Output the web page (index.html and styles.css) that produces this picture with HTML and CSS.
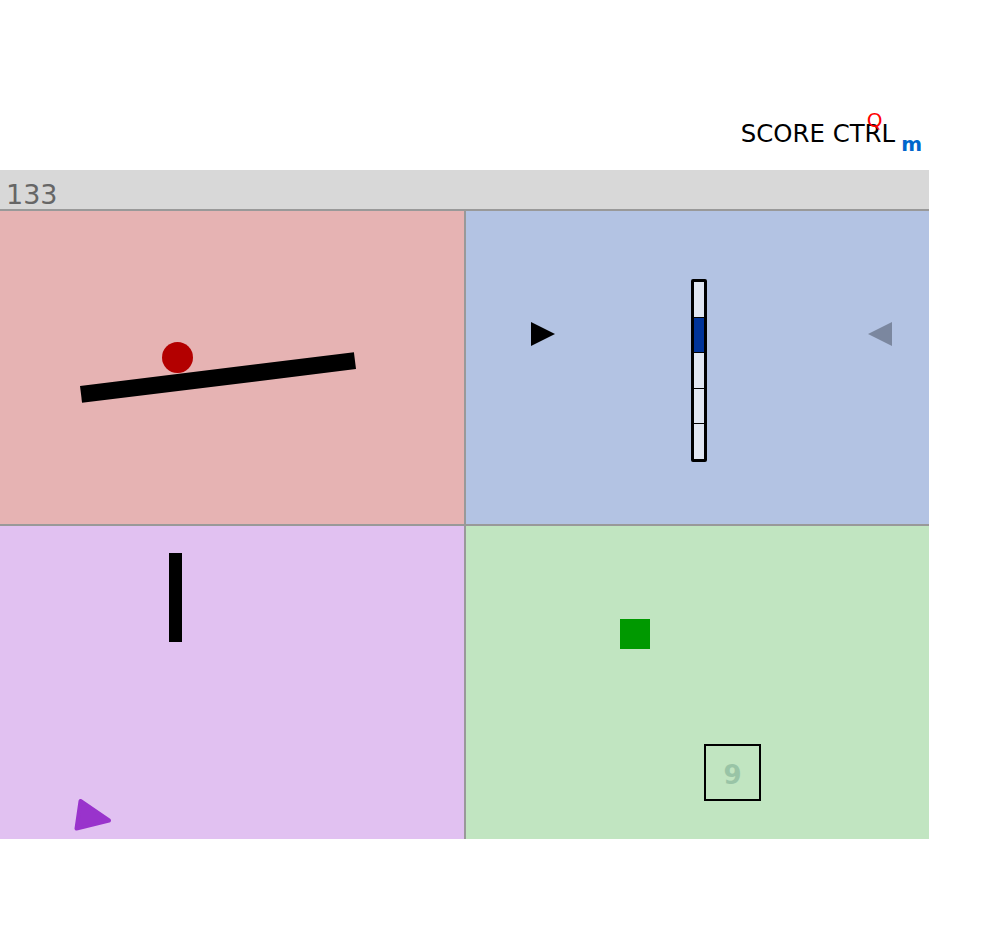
FILE: index.html
```html
<!DOCTYPE html>
<html>
<head>
<meta charset="utf-8">
<link rel="stylesheet" href="styles.css">
</head>
<body>
<div class="page">
  <header class="header">
    <span class="title">SCORE CTRL<span class="q">Q</span></span>
    <span class="mark">m</span>
  </header>
  <div class="scorebar">133</div>
  <div class="board">
    <section class="panel pink">
      <div class="beam"></div>
      <div class="ball"></div>
    </section>
    <section class="panel blue">
      <svg class="arrow arrow-right" width="24" height="24" viewBox="0 0 24 24"><polygon points="0,0 24,12 0,24" fill="#000"/></svg>
      <div class="meter">
        <div class="seg"></div>
        <div class="seg on"></div>
        <div class="seg"></div>
        <div class="seg"></div>
        <div class="seg"></div>
      </div>
      <svg class="arrow arrow-left" width="24" height="24" viewBox="0 0 24 24"><polygon points="24,0 0,12 24,24" fill="#7b879f"/></svg>
    </section>
    <section class="panel purple">
      <div class="post"></div>
      <svg class="tri" width="45" height="42" viewBox="0 0 45 42"><polygon points="10.5,7 39,26.5 6.5,34.5" fill="#9933cc" stroke="#9933cc" stroke-width="4" stroke-linejoin="round"/></svg>
    </section>
    <section class="panel green">
      <div class="block"></div>
      <div class="counter">9</div>
    </section>
  </div>
</div>
</body>
</html>
```

FILE: styles.css
```css
html, body {
  margin: 0;
  padding: 0;
  background: #fff;
}

body {
  font-family: "DejaVu Sans", "Noto Sans", sans-serif;
}

.page {
  width: 929px;
}

.header {
  height: 170px;
  display: flex;
  justify-content: flex-end;
  align-items: flex-start;
  padding-right: 7px;
  box-sizing: border-box;
}

.title {
  position: relative;
  margin-top: 120px;
  font-size: 24.4px;
  line-height: 28px;
  color: #000;
}

.q {
  position: absolute;
  left: 126px;
  top: -10px;
  font-size: 20px;
  line-height: 20px;
  color: #ff0000;
}

.mark {
  margin-top: 134px;
  margin-left: 6px;
  font-size: 20px;
  line-height: 20px;
  font-weight: bold;
  color: #0066cc;
}

.scorebar {
  background: #d8d8d8;
  color: #666;
  font-size: 27px;
  line-height: 26px;
  padding: 12px 0 1px 6px;
  border-bottom: 2px solid #999;
}

.board {
  display: grid;
  grid-template-columns: 464px 463px;
  grid-template-rows: 313px 313px;
  gap: 2px;
  background: #999;
}

.panel {
  position: relative;
  overflow: hidden;
}

.pink { background: #e6b3b3; }
.blue { background: #b3c3e3; }
.purple { background: #e1c1f1; }
.green { background: #c1e5c1; }

.beam {
  position: absolute;
  left: 80px;
  top: 158px;
  width: 276px;
  height: 17px;
  background: #000;
  transform: rotate(-7deg);
}

.ball {
  position: absolute;
  left: 162px;
  top: 131px;
  width: 31px;
  height: 31px;
  border-radius: 50%;
  background: #b30000;
}

.arrow {
  position: absolute;
  top: 111px;
  display: block;
}

.arrow-right { left: 65px; }
.arrow-left { left: 402px; }

.meter {
  position: absolute;
  left: 225px;
  top: 68px;
  width: 16px;
  height: 183px;
  box-sizing: border-box;
  border: 3px solid #000;
  border-radius: 2px;
  background: #e0e6f2;
  display: flex;
  flex-direction: column;
}

.seg {
  flex: 1;
  border-top: 1px solid #000;
}

.seg:first-child {
  border-top: 0;
}

.seg.on {
  background: #003399;
}

.post {
  position: absolute;
  left: 169px;
  top: 27px;
  width: 13px;
  height: 89px;
  background: #000;
}

.tri {
  position: absolute;
  left: 70px;
  top: 268px;
  display: block;
}

.block {
  position: absolute;
  left: 154px;
  top: 93px;
  width: 30px;
  height: 30px;
  background: #009900;
}

.counter {
  position: absolute;
  left: 238px;
  top: 218px;
  width: 57px;
  height: 57px;
  box-sizing: border-box;
  border: 2px solid #000;
  display: flex;
  align-items: center;
  justify-content: center;
  padding-top: 4px;
  font-size: 26px;
  font-weight: bold;
  color: #99c4a6;
}
```
